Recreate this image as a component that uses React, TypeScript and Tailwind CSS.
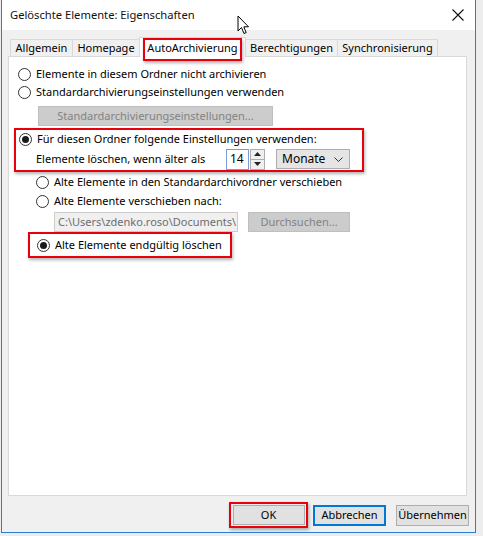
import React from "react";

const font = { fontFamily: '"Noto Sans", "Open Sans", sans-serif' };

function Radio({ checked = false }: { checked?: boolean }) {
  return (
    <span className="flex h-[13px] w-[13px] shrink-0 items-center justify-center rounded-full border border-[#333] bg-white">
      {checked && <span className="h-[7px] w-[7px] rounded-full bg-[#1a1a1a]" />}
    </span>
  );
}

function RadioRow({ label, checked = false, className = "" }: { label: string; checked?: boolean; className?: string }) {
  return (
    <div className={`flex h-[18px] items-center gap-[5px] ${className}`}>
      <Radio checked={checked} />
      <span className="whitespace-nowrap">{label}</span>
    </div>
  );
}

function Tab({ label, w }: { label: string; w: string }) {
  return (
    <div className={`-ml-px flex h-[17px] items-center justify-center border-x border-t border-[#d9d9d9] bg-[#f0f0f0] ${w}`}>
      {label}
    </div>
  );
}

function Cursor() {
  return (
    <svg width="13" height="20" viewBox="0 0 13 20" className="absolute left-[235px] top-[15px]">
      <path d="M1 1 L1 16 L4.5 12.5 L7 18.5 L9.2 17.6 L6.8 11.8 L11.5 11.8 Z" fill="#fff" stroke="#000" strokeWidth="1" strokeLinejoin="round" />
    </svg>
  );
}

export default function App() {
  return (
    <div className="h-[536px] w-[483px] overflow-hidden bg-[#ededed] text-[11px] text-black" style={font}>
      <div className="relative ml-px flex h-[533px] w-[475px] flex-col border-x border-b border-[#2a7fd4] bg-[#f0f0f0]">
        {/* title bar */}
        <div className="flex h-[30px] items-center justify-between bg-white pl-[8px] pr-[11px]">
          <span className="text-[11.2px] text-[#111]">Gelöschte Elemente: Eigenschaften</span>
          <svg width="12" height="12" viewBox="0 0 12 12">
            <path d="M0.5 0.5 L11.5 11.5 M11.5 0.5 L0.5 11.5" stroke="#111" strokeWidth="1.1" />
          </svg>
        </div>
        <Cursor />

        {/* tabs */}
        <div className="ml-[6px] mt-[7px] w-[459px]">
          <div className="relative z-10 flex h-[19px] items-end pl-[3px]">
            <Tab label="Allgemein" w="w-[63px]" />
            <Tab label="Homepage" w="w-[68px]" />
            <div className="-ml-px -mb-px h-[20px] w-[107px] border-x border-t border-[#d9d9d9] bg-white px-[3px]">
              <div className="flex h-[23px] items-center justify-center border-2 border-[#e8000d] pb-[3px] shadow-[1px_2px_3px_rgba(0,0,0,0.3)]">
                AutoArchivierung
              </div>
            </div>
            <Tab label="Berechtigungen" w="w-[93px]" />
            <Tab label="Synchronisierung" w="w-[101px]" />
          </div>

          {/* panel */}
          <div className="flex h-[440px] flex-col border border-[#d9d9d9] bg-white pl-[9px] pt-[8px]">
            <RadioRow label="Elemente in diesem Ordner nicht archivieren" />
            <RadioRow label="Standardarchivierungseinstellungen verwenden" />
            <div className="ml-[20px] mt-[5px] flex h-[20px] w-[235px] items-center justify-center border border-[#bfbfbf] bg-[#cccccc] text-[#838383]">
              Standardarchivierungseinstellungen...
            </div>

            <div className="-ml-[4px] mt-[2px] flex h-[44px] w-[350px] flex-col border-2 border-[#e8000d] pl-[3px] shadow-[1px_2px_3px_rgba(0,0,0,0.3)]">
              <RadioRow label="Für diesen Ordner folgende Einstellungen verwenden:" checked />
              <div className="flex h-[22px] items-center">
                <span className="ml-[17px] w-[190px] whitespace-nowrap">Elemente löschen, wenn älter als</span>
                <div className="flex h-[21px] w-[23px] items-center border border-[#7a9cd3] bg-white pl-[3px] text-[12px]">14</div>
                <div className="ml-[1px] flex h-[21px] w-[15px] flex-col border border-[#adadad] bg-[#f0f0f0]">
                  <div className="flex flex-1 items-center justify-center border-b border-[#adadad]">
                    <svg width="7" height="4" viewBox="0 0 7 4"><path d="M3.5 0 L7 4 L0 4 Z" fill="#222" /></svg>
                  </div>
                  <div className="flex flex-1 items-center justify-center">
                    <svg width="7" height="4" viewBox="0 0 7 4"><path d="M0 0 L7 0 L3.5 4 Z" fill="#222" /></svg>
                  </div>
                </div>
                <div className="ml-[11px] flex h-[20px] w-[74px] items-center justify-between border border-[#adadad] bg-[#e5e5e5] pl-[5px] pr-[6px] text-[12px]">
                  <span>Monate</span>
                  <svg width="9" height="5" viewBox="0 0 9 5"><path d="M0.5 0.5 L4.5 4.5 L8.5 0.5" fill="none" stroke="#333" strokeWidth="1" /></svg>
                </div>
              </div>
            </div>

            <RadioRow className="ml-[18px] mt-px" label="Alte Elemente in den Standardarchivordner verschieben" />
            <RadioRow className="ml-[18px] mt-px" label="Alte Elemente verschieben nach:" />
            <div className="ml-[36px] mt-[2px] flex h-[20px] items-center gap-[10px]">
              <div className="flex h-[20px] w-[184px] items-center overflow-hidden whitespace-nowrap border border-[#cccccc] bg-[#f0f0f0] pl-[3px] text-[#6d6d6d]">
                C:\Users\zdenko.roso\Documents\
              </div>
              <div className="flex h-[20px] w-[102px] items-center justify-center border border-[#bfbfbf] bg-[#cccccc] text-[#838383]">
                Durchsuchen...
              </div>
            </div>
            <div className="ml-[10px] flex h-[26px] w-[204px] items-center border-2 border-[#e8000d] pl-[7px] shadow-[1px_2px_3px_rgba(0,0,0,0.3)]">
              <RadioRow label="Alte Elemente endgültig löschen" checked />
            </div>
          </div>
        </div>

        {/* buttons */}
        <div className="mt-[6px] flex items-center justify-end gap-[5px] pr-[6px]">
          <div className="flex h-[26px] w-[79px] items-center justify-center border-2 border-[#e8000d] shadow-[1px_2px_3px_rgba(0,0,0,0.3)]">
            <div className="flex h-[20px] w-[72px] items-center justify-center border border-[#adadad] bg-[#e1e1e1]">OK</div>
          </div>
          <div className="flex h-[21px] w-[73px] items-center justify-center border-2 border-[#0078d7] bg-[#e1e1e1]">Abbrechen</div>
          <div className="ml-[5px] flex h-[21px] w-[73px] items-center justify-center border border-[#adadad] bg-[#e1e1e1]">Übernehmen</div>
        </div>
      </div>
    </div>
  );
}
